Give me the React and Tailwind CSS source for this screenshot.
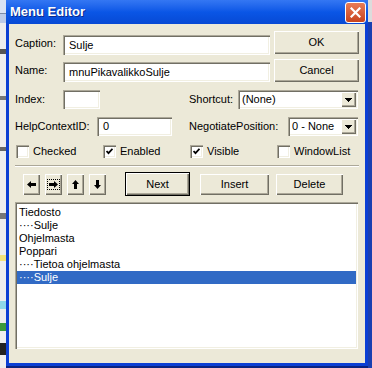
import React from 'react';

const sunken = 'shadow-[inset_1px_1px_0_#aca899,inset_2px_2px_0_#716f64,inset_-1px_-1px_0_#ffffff,inset_-2px_-2px_0_#f1efe2]';
const raised = 'shadow-[inset_1px_1px_0_#ffffff,inset_-1px_-1px_0_#716f64,inset_-2px_-2px_0_#aca899]';

const listItems = ['Tiedosto', '····Sulje', 'Ohjelmasta', 'Poppari', '····Tietoa ohjelmasta', '····Sulje'];

function TextBox({ value, className }) {
  return (
    <div className={`bg-white ${sunken} flex items-center pl-[6px] ${className}`}>{value}</div>
  );
}

function Button({ children, className }) {
  return (
    <div className={`bg-[#ece9d8] ${raised} flex items-center justify-center ${className}`}>{children}</div>
  );
}

function Select({ value, className }) {
  return (
    <div className={`bg-white ${sunken} flex items-center p-[2px] ${className}`}>
      <div className="flex-1 pl-[2px]">{value}</div>
      <div className={`w-[15px] h-full bg-[#ece9d8] ${raised} flex items-center justify-center`}>
        <svg width="7" height="4" viewBox="0 0 7 4" shapeRendering="crispEdges">
          <polygon points="0,0 7,0 3.5,4" fill="#000" />
        </svg>
      </div>
    </div>
  );
}

function Check({ label, checked }) {
  return (
    <div className="w-[87px] flex items-center h-[13px]">
      <div className={`w-[13px] h-[13px] bg-white ${sunken} flex items-center justify-center`}>
        {checked && (
          <svg width="7" height="7" viewBox="0 0 7 7">
            <polyline points="0.5,3 2.5,5.2 6.5,0.8" fill="none" stroke="#000" strokeWidth="1.8" />
          </svg>
        )}
      </div>
      <span className="ml-[4px]">{label}</span>
    </div>
  );
}

function Arrow({ dir }) {
  const pts = {
    left: '0,3.5 4,0 4,2 9,2 9,5 4,5 4,7',
    right: '9,3.5 5,0 5,2 0,2 0,5 5,5 5,7',
    up: '3.5,0 7,4 5,4 5,9 2,9 2,4 0,4',
    down: '3.5,9 7,5 5,5 5,0 2,0 2,5 0,5',
  }[dir];
  const vertical = dir === 'up' || dir === 'down';
  return (
    <svg width={vertical ? 7 : 9} height={vertical ? 9 : 7} viewBox={vertical ? '0 0 7 9' : '0 0 9 7'}>
      <polygon points={pts} fill="#000" />
    </svg>
  );
}

export default function App() {
  return (
    <div className="w-[372px] h-[368px] flex bg-[#0a2380] overflow-hidden font-['Liberation_Sans',Arial,sans-serif] text-[11px] leading-[13px] text-black">
      <div className="w-[6px] h-[368px] flex flex-col bg-[#eeeeee]">
        <div className="h-[13px] bg-[#d9e2f3]" />
        <div className="h-[1px] bg-[#7b8aa6]" />
        <div className="h-[9px] bg-[#bccbe8]" />
        <div className="h-[26px]" />
        <div className="h-[5px] bg-[#555]" />
        <div className="h-[42px]" />
        <div className="h-[4px] bg-[#777]" />
        <div className="h-[47px]" />
        <div className="h-[4px] bg-[#666]" />
        <div className="h-[62px]" />
        <div className="h-[6px] bg-[#777]" />
        <div className="h-[36px]" />
        <div className="h-[6px] bg-[#f3e27a]" />
        <div className="h-[40px]" />
        <div className="h-[8px] bg-[#8fd8e8]" />
        <div className="h-[14px]" />
        <div className="h-[8px] bg-[#3c9a3c]" />
        <div className="h-[12px]" />
        <div className="h-[12px] bg-[#222]" />
      </div>

      <div className="w-[362px] h-[366px] flex flex-col bg-[#0b3fd4]">
        <div className="h-[24px] flex items-center pl-[4px] bg-linear-to-b from-[#3477f3] via-[#0a56e6] to-[#0749d4]">
          <span className="text-white font-bold text-[13px] leading-[16px] [text-shadow:1px_1px_0_#0b2a8c]">Menu Editor</span>
          <div className="ml-auto mr-[2px] w-[21px] h-[21px] rounded-[3px] border border-white bg-linear-to-b from-[#e87b56] to-[#c8431c] flex items-center justify-center">
            <svg width="11" height="11" viewBox="0 0 11 11">
              <path d="M1.5 1.5 L9.5 9.5 M9.5 1.5 L1.5 9.5" stroke="#fff" strokeWidth="2.2" strokeLinecap="square" />
            </svg>
          </div>
        </div>

        <div className="flex-1 px-[3px] pb-[3px] flex">
          <div className="w-[356px] h-[339px] bg-[#ece9d8] pl-[6px] flex flex-col">
            <div className="mt-[7px] h-[24px] flex items-start">
              <span className="w-[48px] mt-[6px]">Caption:</span>
              <TextBox value="Sulje" className="mt-[4px] w-[207px] h-[20px]" />
              <Button className="ml-[4px] w-[85px] h-[23px]">OK</Button>
            </div>
            <div className="mt-[4px] h-[24px] flex items-start">
              <span className="w-[48px] mt-[5px]">Name:</span>
              <TextBox value="mnuPikavalikkoSulje" className="mt-[3px] w-[207px] h-[20px]" />
              <Button className="ml-[4px] w-[85px] h-[23px]">Cancel</Button>
            </div>
            <div className="mt-[7px] h-[19px] flex items-center">
              <span className="w-[48px]">Index:</span>
              <TextBox value="" className="w-[37px] h-[19px]" />
              <span className="ml-[89px] w-[49px]">Shortcut:</span>
              <Select value="(None)" className="w-[120px] h-[19px]" />
            </div>
            <div className="mt-[8px] h-[19px] flex items-center">
              <span className="w-[82px]">HelpContextID:</span>
              <TextBox value="0" className="w-[75px] h-[19px]" />
              <span className="ml-[17px] w-[99px]">NegotiatePosition:</span>
              <Select value="0 - None" className="w-[70px] h-[19px]" />
            </div>
            <div className="mt-[9px] h-[13px] flex pl-[1px]">
              <Check label="Checked" checked={false} />
              <Check label="Enabled" checked />
              <Check label="Visible" checked />
              <Check label="WindowList" checked={false} />
            </div>
            <div className="mt-[7px] w-[344px] h-[2px] border-t border-b border-t-[#aca899] border-b-white" />
            <div className="mt-[5px] h-[24px] flex items-start">
              <Button className="ml-[8px] mt-[2px] w-[17px] h-[21px]"><Arrow dir="left" /></Button>
              <Button className="ml-[5px] mt-[2px] w-[17px] h-[21px]">
                <div className="border border-dotted border-black px-[1px] py-[1px] flex"><Arrow dir="right" /></div>
              </Button>
              <Button className="ml-[5px] mt-[2px] w-[17px] h-[21px]"><Arrow dir="up" /></Button>
              <Button className="ml-[5px] mt-[2px] w-[17px] h-[21px]"><Arrow dir="down" /></Button>
              <div className="ml-[19px] w-[65px] h-[24px] border border-black flex">
                <Button className="flex-1">Next</Button>
              </div>
              <Button className="ml-[10px] mt-[2px] w-[69px] h-[21px]">Insert</Button>
              <Button className="ml-[7px] mt-[2px] w-[67px] h-[21px]">Delete</Button>
            </div>
            <div className={`mt-[6px] w-[343px] h-[147px] bg-white ${sunken} p-[2px] pt-[4px] flex flex-col`}>
              {listItems.map((item, i) => (
                <div
                  key={i}
                  className={`h-[13px] pl-[2px] whitespace-nowrap ${i === listItems.length - 1 ? 'bg-[#316ac5] text-white' : ''}`}
                >
                  {item}
                </div>
              ))}
            </div>
          </div>
        </div>
      </div>

      <div className="w-[4px] h-[368px] flex flex-col bg-[#1a3fb0]">
        <div className="h-[22px] bg-[#dcdcdc]" />
      </div>
    </div>
  );
}
